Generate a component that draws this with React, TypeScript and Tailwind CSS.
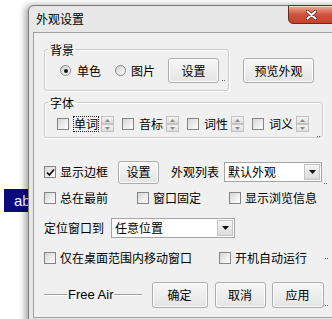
import React from 'react';

const cjk = "font-['Noto_Sans_CJK_SC','Noto_Sans',sans-serif]";

const Checkbox: React.FC<{ checked?: boolean; className?: string }> = ({ checked, className = '' }) => (
  <span
    className={`w-[12px] h-[12px] shrink-0 border border-[#858585] bg-linear-to-br from-[#d6d6d6] to-[#ffffff] flex items-center justify-center ${className}`}
  >
    {checked && (
      <svg width="9" height="9" viewBox="0 0 9 9">
        <path d="M1 4.5 L3.4 7 L8 1.5" fill="none" stroke="#111" strokeWidth={1.8} />
      </svg>
    )}
  </span>
);

const Radio: React.FC<{ checked?: boolean; className?: string }> = ({ checked, className = '' }) => (
  <span
    className={`w-[11px] h-[11px] shrink-0 rounded-full border border-[#858585] bg-linear-to-br from-[#d0d0d0] to-[#ffffff] flex items-center justify-center ${className}`}
  >
    {checked && <span className="w-[4px] h-[4px] rounded-full bg-[#111]" />}
  </span>
);

const Btn: React.FC<{ className?: string; children: React.ReactNode }> = ({ className = '', children }) => (
  <div
    className={`shrink-0 flex items-center justify-center border border-[#acacac] rounded-[3px] bg-linear-to-b from-[#f7f7f7] to-[#e4e4e4] shadow-[inset_0_0_0_1px_#fdfdfd] text-[12px] ${className}`}
  >
    {children}
  </div>
);

const Combo: React.FC<{ text: string; className?: string }> = ({ text, className = '' }) => (
  <div className={`shrink-0 h-[20px] flex border border-[#a5a5a5] bg-white ${className}`}>
    <span className="flex-1 pl-[3px] leading-[18px] text-[12px]">{text}</span>
    <span className="w-[16px] m-[1px] flex items-center justify-center border border-[#c4c4c4] bg-linear-to-b from-[#f4f4f4] to-[#dcdcdc]">
      <svg width="7" height="4" viewBox="0 0 7 4">
        <path d="M0 0 H7 L3.5 4 Z" fill="#111" />
      </svg>
    </span>
  </div>
);

const Spin: React.FC<{ className?: string }> = ({ className = '' }) => (
  <span className={`w-[13px] h-[16px] shrink-0 flex flex-col ${className}`}>
    {[0, 1].map((i) => (
      <span
        key={i}
        className="flex-1 flex items-center justify-center border border-[#c2c2c2] bg-linear-to-b from-[#f3f3f3] to-[#dedede]"
      >
        <svg width="5" height="3" viewBox="0 0 5 3">
          <path d={i === 0 ? 'M0 3 H5 L2.5 0 Z' : 'M0 0 H5 L2.5 3 Z'} fill="#8a8a8a" />
        </svg>
      </span>
    ))}
  </span>
);

const Dots: React.FC<{ className?: string }> = ({ className = '' }) => (
  <span className={`flex gap-[1px] ${className}`}>
    <span className="w-[1px] h-[1px] bg-[#666]" />
    <span className="w-[1px] h-[1px] bg-[#666]" />
  </span>
);

const Label: React.FC<{ className?: string; children: React.ReactNode }> = ({ className = '', children }) => (
  <span className={`text-[12px] leading-[16px] whitespace-nowrap ${className}`}>{children}</span>
);

const fontItems = ['单词', '音标', '词性', '词义'];

export default function App() {
  return (
    <div className={`relative w-[332px] h-[319px] overflow-hidden bg-white text-black ${cjk}`}>
      {/* desktop item behind the window */}
      <div className="absolute left-[4px] top-[189px] w-[32px] h-[23px] bg-[#0b0b7d] text-white text-[15px] leading-[23px] pl-[10px] font-['Liberation_Sans',sans-serif]">
        ab
      </div>

      {/* window */}
      <div className="absolute left-[28px] top-[5px] w-[320px] h-[330px] rounded-tl-[6px] border border-[#7b7b7b] bg-[#e7e7e7] shadow-[-3px_0_6px_rgba(0,0,0,0.35)]">
        <div className="h-[26px] flex items-center pl-[7px] text-[12px]">外观设置</div>

        <div className="absolute top-[-1px] left-[259px] w-[48px] h-[19px] rounded-bl-[5px] border border-[#6e2a1e] bg-linear-to-b from-[#e9ab9a] via-[#d0533d] to-[#c7402a] shadow-[inset_0_1px_0_rgba(255,255,255,0.5)] flex items-center justify-center">
          <svg width="11" height="10" viewBox="0 0 11 10" className="ml-[-2px]">
            <path d="M1.5 1.5 L9.5 8.5 M9.5 1.5 L1.5 8.5" stroke="#5a1e14" strokeWidth={3.4} strokeLinecap="round" />
            <path d="M1.5 1.5 L9.5 8.5 M9.5 1.5 L1.5 8.5" stroke="#ffffff" strokeWidth={2} strokeLinecap="round" />
          </svg>
        </div>

        {/* client area */}
        <div className="ml-[4px] h-[286px] border-t border-l border-b border-[#a0a0a0] bg-[#f0f0f0] pl-[10px] text-[12px]">
          {/* row 1: background */}
          <div className="mt-[8px] flex items-start">
            <fieldset className="w-[185px] border border-[#cbcbcb] rounded-[3px] pb-[7px] shadow-[inset_1px_1px_0_#ffffff,1px_1px_0_#ffffff]">
              <legend className="ml-[3px] px-[2px] leading-[17px] text-[12px]">背景</legend>
              <div className="flex items-center h-[25px] pl-[15px]">
                <Radio checked />
                <Label className="ml-[6px]">单色</Label>
                <Radio className="ml-[14px]" />
                <Label className="ml-[5px]">图片</Label>
                <Btn className="ml-[13px] w-[51px] h-[25px]">设置</Btn>
                <Dots className="ml-[3px] self-end mb-[2px]" />
              </div>
            </fieldset>
            <Btn className="ml-[14px] mt-[17px] w-[71px] h-[25px]">预览外观</Btn>
          </div>

          {/* row 2: font */}
          <div className="mt-[3px] flex items-end">
            <fieldset className="w-[279px] border border-[#cbcbcb] rounded-[3px] pt-[5px] pb-[5px] shadow-[inset_1px_1px_0_#ffffff,1px_1px_0_#ffffff]">
              <legend className="ml-[3px] px-[2px] leading-[17px] text-[12px]">字体</legend>
              <div className="flex items-center h-[16px] pl-[12px]">
                {fontItems.map((t, i) => (
                  <React.Fragment key={t}>
                    <Checkbox className={i === 0 ? '' : 'ml-[8px]'} />
                    <span
                      className={`ml-[4px] w-[26px] h-[16px] flex items-center justify-center border ${
                        i === 0 ? 'border-dotted border-[#222]' : 'border-transparent'
                      }`}
                    >
                      <Label>{t}</Label>
                    </span>
                    <Spin className="ml-[2px]" />
                  </React.Fragment>
                ))}
              </div>
            </fieldset>
            <Dots className="ml-[-6px] mb-[1px]" />
          </div>

          {/* row 3 */}
          <div className="mt-[22px] h-[24px] flex items-center">
            <Checkbox checked />
            <Label className="ml-[4px]">显示边框</Label>
            <Btn className="ml-[10px] w-[41px] h-[23px]">设置</Btn>
            <Label className="ml-[12px]">外观列表</Label>
            <Combo text="默认外观" className="ml-[5px] w-[98px]" />
            <Dots className="ml-[2px] self-end" />
          </div>

          {/* row 4 */}
          <div className="mt-[6px] h-[16px] flex items-center">
            <Checkbox />
            <Label className="ml-[4px]">总在最前</Label>
            <Checkbox className="ml-[29px]" />
            <Label className="ml-[4px]">窗口固定</Label>
            <Checkbox className="ml-[28px]" />
            <Label className="ml-[4px]">显示浏览信息</Label>
          </div>

          {/* row 5 */}
          <div className="mt-[12px] h-[20px] flex items-center">
            <Label>定位窗口到</Label>
            <Combo text="任意位置" className="ml-[7px] w-[124px]" />
          </div>

          {/* row 6 */}
          <div className="mt-[12px] h-[16px] flex items-center">
            <Checkbox />
            <Label className="ml-[4px]">仅在桌面范围内移动窗口</Label>
            <Checkbox className="ml-[27px]" />
            <Label className="ml-[4px]">开机自动运行</Label>
            <Dots className="ml-[18px]" />
          </div>

          {/* row 7 */}
          <div className="mt-[16px] h-[26px] flex items-center">
            <span className="w-[23px] h-[2px] border-t border-[#a0a0a0] border-b border-b-white" />
            <span className="ml-[1px] text-[13px] leading-[16px] font-['Liberation_Sans',sans-serif]">Free Air</span>
            <span className="w-[28px] h-[2px] border-t border-[#a0a0a0] border-b border-b-white" />
            <Btn className="ml-[10px] w-[56px] h-[26px]">确定</Btn>
            <Btn className="ml-[7px] w-[51px] h-[26px]">取消</Btn>
            <Btn className="ml-[6px] w-[52px] h-[26px]">应用</Btn>
            <Dots className="ml-[1px] self-end mb-[2px]" />
          </div>
        </div>
      </div>
    </div>
  );
}
